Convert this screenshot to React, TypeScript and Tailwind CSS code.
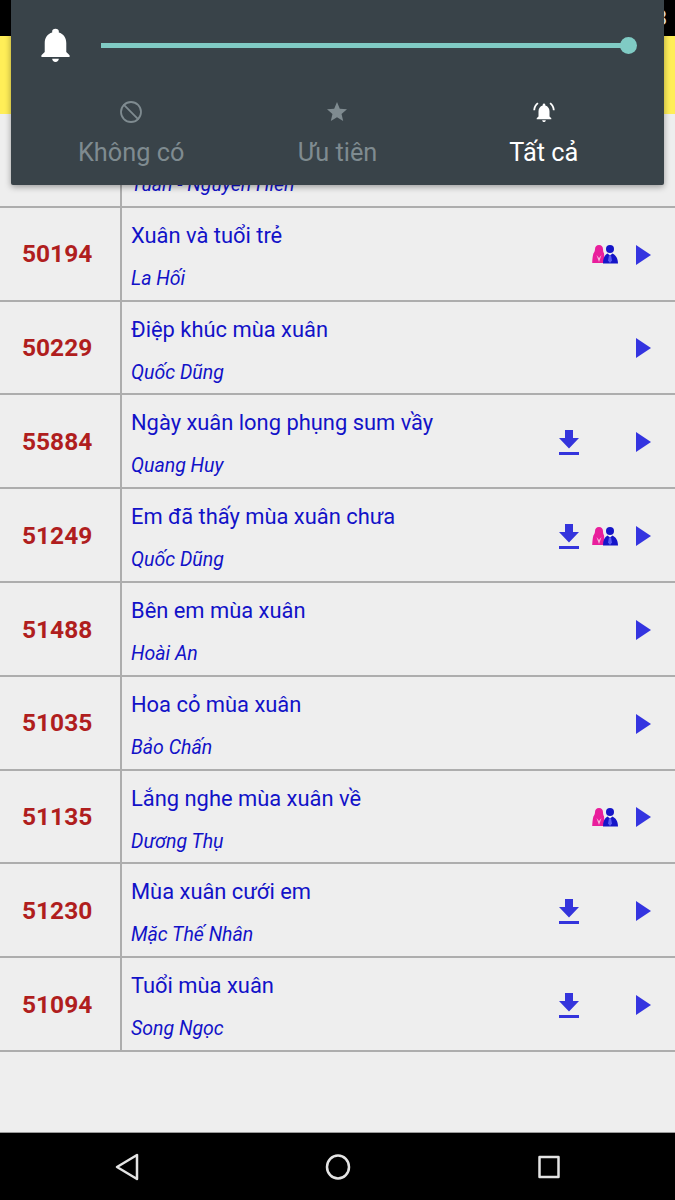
import { Ban } from 'lucide-react';

type Song = {
  code: string;
  title: string;
  author: string;
  download?: boolean;
  couple?: boolean;
};

const SONGS: Song[] = [
  { code: '', title: '', author: 'Tuấn - Nguyễn Hiền' },
  { code: '50194', title: 'Xuân và tuổi trẻ', author: 'La Hối', couple: true },
  { code: '50229', title: 'Điệp khúc mùa xuân', author: 'Quốc Dũng' },
  { code: '55884', title: 'Ngày xuân long phụng sum vầy', author: 'Quang Huy', download: true },
  { code: '51249', title: 'Em đã thấy mùa xuân chưa', author: 'Quốc Dũng', download: true, couple: true },
  { code: '51488', title: 'Bên em mùa xuân', author: 'Hoài An' },
  { code: '51035', title: 'Hoa cỏ mùa xuân', author: 'Bảo Chấn' },
  { code: '51135', title: 'Lắng nghe mùa xuân về', author: 'Dương Thụ', couple: true },
  { code: '51230', title: 'Mùa xuân cưới em', author: 'Mặc Thế Nhân', download: true },
  { code: '51094', title: 'Tuổi mùa xuân', author: 'Song Ngọc', download: true },
];

function BellIcon({ className }: { className?: string }) {
  return (
    <svg viewBox="3.5 2 17 20.5" className={className} fill="currentColor">
      <path d="M12 22.5c1.1 0 2-.9 2-2h-4c0 1.1.9 2 2 2zm6.5-6v-5.5c0-3.1-1.7-5.6-4.5-6.3v-.7c0-.8-.7-1.5-2-1.5s-2 .7-2 1.5v.7c-2.8.7-4.5 3.2-4.5 6.3v5.5l-2 2v1h17v-1l-2-2z" />
    </svg>
  );
}

function BellRingIcon({ className }: { className?: string }) {
  return (
    <svg viewBox="0 0 24 24" className={className} fill="currentColor">
      <path d="M12 22c1 0 1.8-.8 1.8-1.8h-3.6c0 1 .8 1.8 1.8 1.8zm5.5-5.5v-5c0-2.9-1.5-5.2-4.2-5.9v-.6c0-.8-.6-1.4-1.3-1.4s-1.3.6-1.3 1.4v.6c-2.7.7-4.2 3-4.2 5.9v5l-1.8 1.8v.9h14.6v-.9l-1.8-1.8z" />
      <path d="M6.5 3.8 5.3 2.6C3 4.4 1.5 7.1 1.3 10.2h1.8c.2-2.6 1.4-4.9 3.4-6.4zM22.7 10.2c-.2-3.1-1.7-5.8-4-7.6l-1.2 1.2c2 1.5 3.2 3.8 3.4 6.4h1.8z" />
    </svg>
  );
}

function StarIcon({ className }: { className?: string }) {
  return (
    <svg viewBox="0 0 24 24" className={className} fill="currentColor">
      <path d="M12 17.27L18.18 21l-1.64-7.03L22 9.24l-7.19-.61L12 2 9.19 8.63 2 9.24l5.46 4.73L5.82 21z" />
    </svg>
  );
}

function DownloadIcon() {
  return (
    <svg viewBox="0 0 20 25" className="h-[25px] w-[20px]" fill="#3434dc">
      <path d="M6 0h8v8h6L10 18.5 0 8h6z" />
      <rect x="0" y="22" width="20" height="3" />
    </svg>
  );
}

function CoupleIcon() {
  return (
    <svg viewBox="0 0 26 19" className="h-[19px] w-[26px]">
      <path
        d="M7 0c2.6 0 4 1.8 4 4.2 0 1.5.4 3 1 4 .3 3 .6 6.5.8 9.8H.2c.1-3.500.5-7 1.200-9.600C2.400 7.200 3 5.700 3 4.200 3 1.800 4.400 0 7 0z"
        fill="#e91e9c"
      />
      <path d="M4.5 10l2.5 7 2.500-7-2.500 3z" fill="#f6b6dc" />
      <circle cx="18" cy="4" r="4" fill="#1515c8" />
      <path d="M11 18.5c0-5 1.500-8.500 4.500-10l2.500 2 2.500-2c3 1.500 5.500 4.500 5.500 10z" fill="#1515c8" />
      <path d="M17 10.5h2l1 5-2 2.500-2-2.500z" fill="#5c5cf0" />
    </svg>
  );
}

function PlayIcon() {
  return (
    <svg viewBox="0 0 15 20" className="h-[20px] w-[15px]" fill="#3434e0">
      <path d="M0 0l15 10L0 20z" />
    </svg>
  );
}

function SongRow({ song }: { song: Song }) {
  return (
    <div className="flex h-[93.8px] border-b-2 border-[#adadad]">
      <div className="flex w-[122px] shrink-0 items-center border-r-2 border-[#adadad] pt-[2px] pl-[22px] text-[24.5px] font-bold text-[#b01e1e]">
        {song.code}
      </div>
      <div className="min-w-0 flex-1 pl-[9px] text-[#1212c8]">
        <div className="mt-[14px] h-[28px] text-[21.9px] leading-[28px]">{song.title}</div>
        <div className="mt-[17px] h-[24px] text-[19.5px] leading-[24px] italic">{song.author}</div>
      </div>
      {song.code !== '' && (
        <div className="flex w-[124px] shrink-0 items-center pt-[2px]">
          <div className="flex w-[36px] justify-center">{song.download && <DownloadIcon />}</div>
          <div className="flex w-[36px] justify-center">{song.couple && <CoupleIcon />}</div>
          <div className="ml-[2px] flex w-[36px] justify-center">
            <PlayIcon />
          </div>
        </div>
      )}
    </div>
  );
}

function VolumePanel() {
  return (
    <div className="absolute top-0 left-[11px] h-[185px] w-[653px] rounded-b-[2px] bg-[#394349] shadow-[0_2px_6px_rgba(0,0,0,0.35)]">
      <div className="flex h-[90px] items-center pl-[30px]">
        <BellIcon className="h-[34px] w-[29px] text-white" />
        <div className="relative ml-[31px] h-[5px] w-[527px] bg-[#80cbc4]">
          <div className="absolute top-[-6px] right-[-9px] h-[17px] w-[17px] rounded-full bg-[#80cbc4]" />
        </div>
      </div>
      <div className="grid grid-cols-3 px-[17px] text-[25.3px] leading-[28px]">
        <div className="flex flex-col items-center text-[#7f8b90]">
          <Ban className="mt-[10px] h-[24px] w-[24px]" strokeWidth={1.8} />
          <span className="mt-[15px]">Không có</span>
        </div>
        <div className="flex flex-col items-center text-[#7f8b90]">
          <StarIcon className="mt-[10px] h-[24px] w-[24px]" />
          <span className="mt-[15px]">Ưu tiên</span>
        </div>
        <div className="flex flex-col items-center text-white">
          <BellRingIcon className="mt-[10px] h-[24px] w-[24px]" />
          <span className="mt-[15px]">Tất cả</span>
        </div>
      </div>
    </div>
  );
}

export default function App() {
  return (
    <div className="relative flex h-[1200px] w-[675px] flex-col overflow-hidden bg-[#eeeeee] font-['Roboto',sans-serif]">
      <div className="flex h-[36px] shrink-0 items-center justify-end bg-black pr-[8px] text-[20px] text-white">8</div>
      <div className="h-[78px] shrink-0 bg-[#ffee58]" />
      <div className="flex-1">
        {SONGS.map((song) => (
          <SongRow key={song.author} song={song} />
        ))}
      </div>
      <div className="flex h-[68px] shrink-0 items-center justify-center border-t border-[#9a9a9a] bg-black text-[#e4e4e4]">
        <div className="grid w-[633px] grid-cols-3 justify-items-center">
          <svg viewBox="0 0 26 28" className="h-[28px] w-[26px]" fill="none" stroke="currentColor" strokeWidth="2.5" strokeLinejoin="round">
            <path d="M23 2v24L3 14z" />
          </svg>
          <svg viewBox="0 0 26 28" className="h-[28px] w-[26px]" fill="none" stroke="currentColor" strokeWidth="2.5">
            <ellipse cx="13" cy="14" rx="11" ry="11.5" />
          </svg>
          <svg viewBox="0 0 26 28" className="h-[28px] w-[26px]" fill="none" stroke="currentColor" strokeWidth="2.5" strokeLinejoin="round">
            <rect x="3.5" y="4" width="19" height="20" />
          </svg>
        </div>
      </div>
      <VolumePanel />
    </div>
  );
}
